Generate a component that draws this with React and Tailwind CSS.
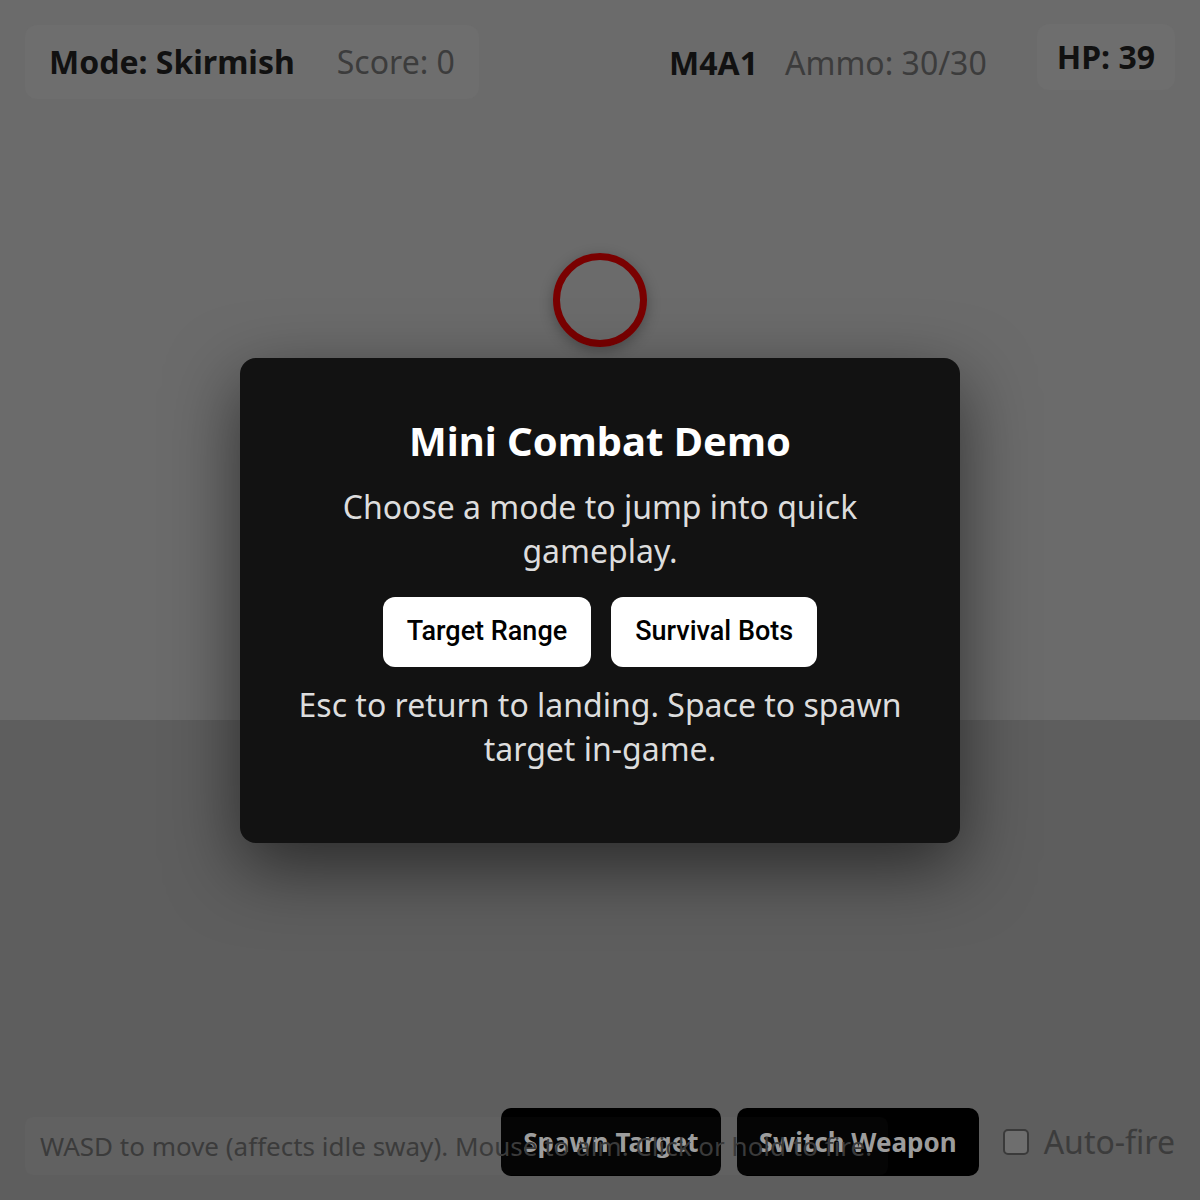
const sans = { fontFamily: '"Noto Sans", "Open Sans", sans-serif' }

function Hud() {
  return (
    <div className="absolute inset-x-0 top-0 flex items-start justify-between px-[25px] pt-[25px]">
      <div className="flex items-center gap-[42px] rounded-xl bg-[#6e6e6e] px-6 py-4 text-[32px] leading-[42px]">
        <span className="font-bold text-[#111]">Mode: Skirmish</span>
        <span className="text-[#3c3c3c]">Score: 0</span>
      </div>
      <div className="flex items-start gap-[50px]">
        <div className="flex items-center gap-[27px] pt-[17px] text-[32px] leading-[42px]">
          <span className="font-bold text-[#111]">M4A1</span>
          <span className="text-[#3c3c3c]">Ammo: 30/30</span>
        </div>
        <div className="-mt-px rounded-xl bg-[#6e6e6e] px-5 py-3 text-[32px] font-bold leading-[42px] text-[#111]">
          HP: 39
        </div>
      </div>
    </div>
  )
}

function BottomBar() {
  return (
    <>
      <div className="absolute right-[25px] bottom-[24px] flex items-center">
        <button className="h-[68px] rounded-[10px] bg-black px-[22px] text-[26px] font-bold text-[#9c9c9c]">
          Spawn Target
        </button>
        <button className="ml-4 h-[68px] rounded-[10px] bg-black px-[22px] text-[26px] font-bold text-[#9c9c9c]">
          Switch Weapon
        </button>
        <label className="ml-6 flex items-center gap-[15px] text-[32px] text-[#3c3c3c]">
          <span className="block size-[26px] rounded-[5px] border-2 border-[#3a3a3a] bg-[#6e6e6e]" />
          Auto-fire
        </label>
      </div>
      {/* help text sits over the buttons in the shot */}
      <div className="pointer-events-none absolute left-[25px] bottom-[25px] flex h-[58px] items-center rounded-lg bg-white/[0.02] pl-[15px] pr-4 text-[26px] text-[#3b3b3b]">
        WASD to move (affects idle sway). Mouse to aim. Click or hold to fire.
      </div>
    </>
  )
}

function ModeModal() {
  return (
    <div className="absolute inset-0 flex items-center justify-center">
      <div className="w-[720px] rounded-2xl bg-[#121212] px-12 pt-[59px] pb-[72px] text-center shadow-[0_24px_70px_rgba(0,0,0,0.55)]">
        <h1 className="text-[40px] font-bold leading-[48px] text-white">Mini Combat Demo</h1>
        <p className="mt-5 text-[32px] leading-[44px] text-[#dddddd]">
          Choose a mode to jump into quick gameplay.
        </p>
        <div className="mt-6 flex justify-center gap-5" style={{ fontFamily: 'Roboto, sans-serif' }}>
          <button className="h-[70px] rounded-xl bg-white px-6 text-[27px] font-medium text-black">
            Target Range
          </button>
          <button className="h-[70px] rounded-xl bg-white px-6 text-[27px] font-medium text-black">
            Survival Bots
          </button>
        </div>
        <p className="mt-4 text-[32px] leading-[44px] text-[#dddddd]">
          Esc to return to landing. Space to spawn target in-game.
        </p>
      </div>
    </div>
  )
}

export default function App() {
  return (
    <div className="relative h-[1200px] w-full overflow-hidden" style={sans}>
      <div className="flex h-full flex-col">
        <div className="h-[720px] bg-[#6b6b6b]" />
        <div className="flex-1 bg-[#5e5e5e]" />
      </div>

      <Hud />

      <div className="absolute left-[553px] top-[253px] size-[94px] rounded-full border-[7px] border-[#7a0000] shadow-[0_4px_14px_rgba(0,0,0,0.3)]" />

      <BottomBar />
      <ModeModal />
    </div>
  )
}
